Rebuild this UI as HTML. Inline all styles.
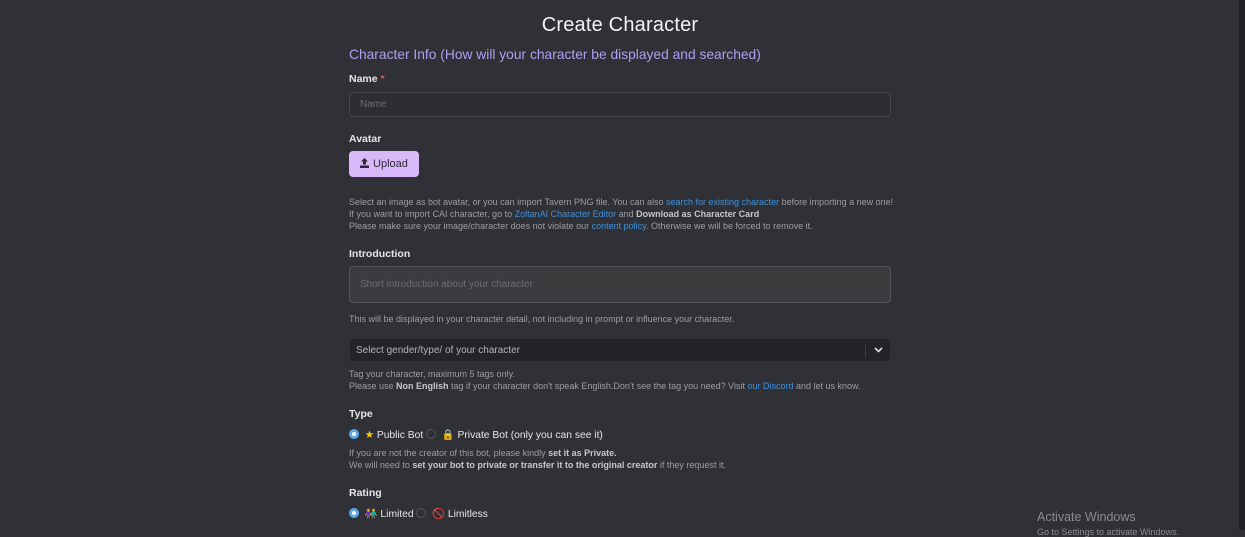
<!DOCTYPE html>
<html><head><style>
*{margin:0;padding:0;box-sizing:border-box}
body{width:1245px;height:530px;overflow:hidden;background:#303136;font-family:"Liberation Sans",sans-serif;color:#e8e8ea;position:relative}
.strip{position:absolute;right:0;top:0;width:6px;height:530px;background:#202226}
.abs{position:absolute}
h1{position:absolute;left:0;width:1240px;top:14px;text-align:center;font-size:20px;font-weight:normal;color:#f2f2f2;letter-spacing:0.2px}
.sub{left:349px;top:47px;font-size:13.8px;color:#b49cf0}
.lbl{left:349px;font-size:10.5px;font-weight:bold;color:#e6e6e6}
.inp{left:349px;width:542px;border:1px solid #45464c;border-radius:4px;font-size:10px;color:#6b6c72;padding-left:10px}
.small{left:349px;font-size:9px;color:#9c9da3;line-height:12.2px;white-space:nowrap}
.small a{color:#3f8fd8;text-decoration:none}
.small b{color:#c6c6ca}
.radio{display:inline-block;width:10px;height:10px;border-radius:50%;vertical-align:-1px}
.on{background:#fff;border:3px solid #5aa8ee}
.off{border:1px solid #55565c}
.row{left:349px;font-size:10.3px;color:#e6e6e6}
</style></head><body>
<div class="strip"></div>
<h1>Create Character</h1>
<div class="abs sub">Character Info (How will your character be displayed and searched)</div>
<div class="abs lbl" style="top:73px">Name <span style="color:#e05a5a">*</span></div>
<div class="abs inp" style="top:92px;height:25px;line-height:24px;background:#2d2e33">Name</div>
<div class="abs lbl" style="top:133px">Avatar</div>
<div class="abs" style="left:349px;top:151px;width:70px;height:26px;background:#d8b8f8;border-radius:4px;color:#2b2b33;font-size:11px;line-height:26px;padding-left:10px">
<svg width="11" height="10" viewBox="0 0 11 10" style="vertical-align:-1px"><path d="M5.5 0 L9 3.5 H7 V6.5 H4 V3.5 H2 Z M1 7.5 H10 V10 H1 Z" fill="#2b2b33"/></svg>&nbsp;Upload</div>
<div class="abs small" style="top:196px">Select an image as bot avatar, or you can import Tavern PNG file. You can also <a>search for existing character</a> before importing a new one!<br>If you want to import CAI character, go to <a>ZoltanAI Character Editor</a> and <b>Download as Character Card</b><br>Please make sure your image/character does not violate our <a>content policy</a>. Otherwise we will be forced to remove it.</div>
<div class="abs lbl" style="top:248px">Introduction</div>
<div class="abs inp" style="top:266px;height:37px;line-height:36px;background:#3c3c3e;border-color:#525358">Short introduction about your character</div>
<div class="abs small" style="top:313px">This will be displayed in your character detail, not including in prompt or influence your character.</div>
<div class="abs inp" style="top:338px;height:24px;line-height:23px;background:#232427;border-color:#2f3034;color:#b4b4b8;padding-left:6px">Select gender/type/ of your character
<div class="abs" style="right:24px;top:5px;width:1px;height:14px;background:#3c3d42"></div>
<svg class="abs" style="right:7px;top:8px" width="9" height="6" viewBox="0 0 9 6"><path d="M1 1 L4.5 4.5 L8 1" stroke="#ddd" stroke-width="1.6" fill="none"/></svg></div>
<div class="abs small" style="top:368px">Tag your character, maximum 5 tags only.<br>Please use <b>Non English</b> tag if your character don't speak English.Don't see the tag you need? Visit <a>our Discord</a> and let us know.</div>
<div class="abs lbl" style="top:408px">Type</div>
<div class="abs row" style="top:428px"><span class="radio on"></span>&nbsp; <span style="color:#f4d000">★</span> Public Bot <span class="radio off"></span>&nbsp; <span style="color:#f0b000">🔒</span> Private Bot (only you can see it)</div>
<div class="abs small" style="top:447px">If you are not the creator of this bot, please kindly <b>set it as Private.</b><br>We will need to <b>set your bot to private or transfer it to the original creator</b> if they request it.</div>
<div class="abs lbl" style="top:487px">Rating</div>
<div class="abs row" style="top:507px"><span class="radio on"></span>&nbsp; <span style="color:#e0a040">👫</span> Limited <span class="radio off"></span>&nbsp; <span style="color:#e04040">🚫</span> Limitless</div>
<div class="abs" style="left:1037px;top:510px;font-size:12.5px;color:#8a8b90">Activate Windows</div>
<div class="abs" style="left:1037px;top:527px;font-size:9px;color:#8a8b90">Go to Settings to activate Windows.</div>
</body></html>
